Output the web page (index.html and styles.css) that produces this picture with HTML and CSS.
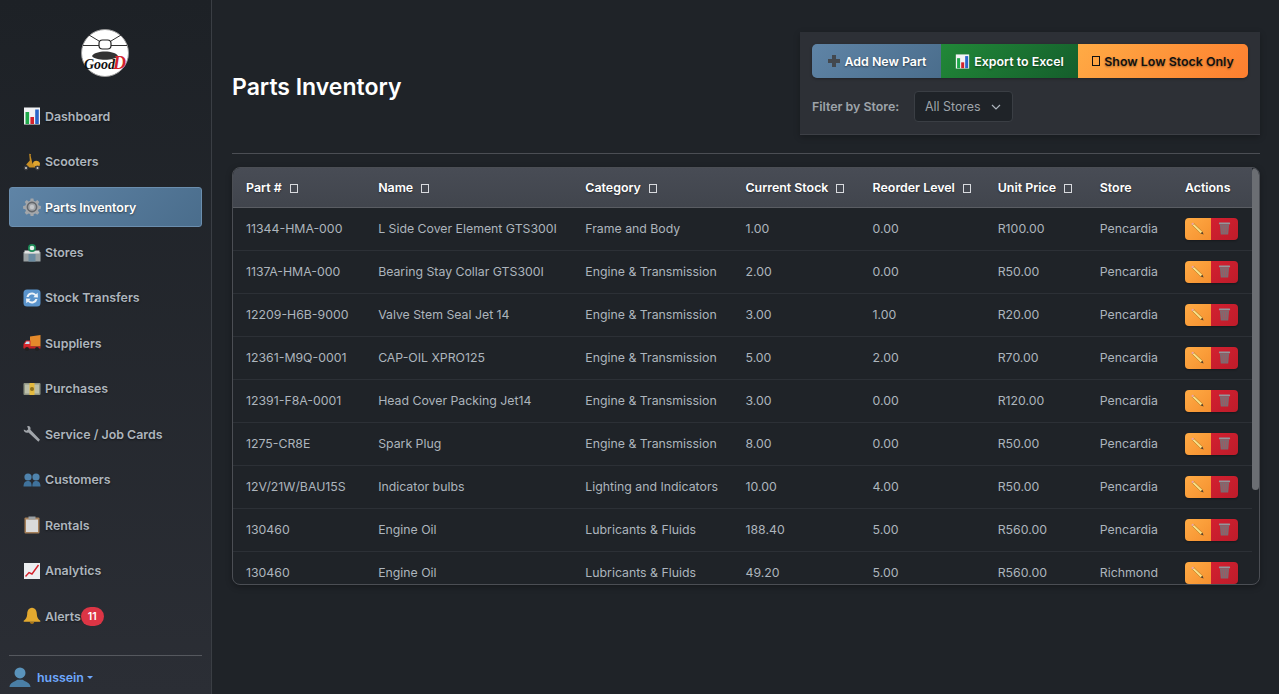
FILE: index.html
```html
<!DOCTYPE html>
<html>
<head>
	<title>Parts Inventory</title>
	<link rel="stylesheet" href="styles.css">
</head>
<body>
	<svg class="sprites" width="0" height="0">
		<symbol id="i-chart" viewBox="0 0 18 18">
			<rect x="1" y="0.5" width="16" height="17" fill="#f2f3f5"/>
			<rect x="2.5" y="5" width="3.6" height="12" fill="#1fa84a"/>
			<rect x="7.4" y="10" width="3.6" height="7" fill="#d3222c"/>
			<rect x="12.2" y="2.5" width="3.6" height="14.5" fill="#2a66c9"/>
		</symbol>
		<symbol id="i-scooter" viewBox="0 0 18 18">
			<path d="M6.2 0.8 L8 1.2 L7.6 2.4 L9.4 10.4 L13 10.4 L12 14.5 L6.5 14.5 L3.2 11.4 L6.8 7.4 Z" fill="#c98f24"/>
			<path d="M10 10.5 C10 7.4 15 6.4 17 10.2 L16.6 13 L11.5 13 Z" fill="#e0a52f"/>
			<circle cx="3" cy="15" r="2.4" fill="#3c3c40"/>
			<circle cx="14.5" cy="15" r="2.4" fill="#3c3c40"/>
			<circle cx="3" cy="15" r="1" fill="#d0d0d0"/>
			<circle cx="14.5" cy="15" r="1" fill="#d0d0d0"/>
		</symbol>
		<symbol id="i-gear" viewBox="0 0 18 18">
			<path d="M7.6 0.5 h2.8 l0.4 2.2 1.6 0.7 1.9-1.3 2 2 -1.3 1.9 0.7 1.6 2.2 0.4 v2.8 l-2.2 0.4 -0.7 1.6 1.3 1.9 -2 2 -1.9-1.3 -1.6 0.7 -0.4 2.2 h-2.8 l-0.4-2.2 -1.6-0.7 -1.9 1.3 -2-2 1.3-1.9 -0.7-1.6 -2.2-0.4 v-2.8 l2.2-0.4 0.7-1.6 -1.3-1.9 2-2 1.9 1.3 1.6-0.7 Z" fill="#a3a6aa"/>
			<circle cx="9" cy="9" r="4.6" fill="none" stroke="#63666b" stroke-width="1.6"/>
			<circle cx="9" cy="9" r="2.2" fill="#c4c6c9"/>
		</symbol>
		<symbol id="i-store" viewBox="0 0 18 18">
			<rect x="0.5" y="8" width="17" height="9.5" fill="#9aa1a3"/>
			<rect x="1.5" y="6.5" width="15" height="3" fill="#dfe2e2"/>
			<rect x="5.5" y="10" width="7" height="7.5" fill="#6a8ba1"/>
			<circle cx="9" cy="4" r="4" fill="#1d8a57"/>
			<circle cx="9" cy="4" r="2.3" fill="#e9f3ee"/>
		</symbol>
		<symbol id="i-transfer" viewBox="0 0 18 18">
			<rect x="0.5" y="0.5" width="17" height="17" rx="3.5" fill="#5b94cc"/>
			<path d="M3.5 8 A5.6 5.6 0 0 1 13 5.2 L14.6 3.8 L15 8.6 L10.3 8.2 L11.8 6.8 A3.6 3.6 0 0 0 5.6 8 Z" fill="#eef3f8"/>
			<path d="M14.5 10 A5.6 5.6 0 0 1 5 12.8 L3.4 14.2 L3 9.4 L7.7 9.8 L6.2 11.2 A3.6 3.6 0 0 0 12.4 10 Z" fill="#eef3f8"/>
		</symbol>
		<symbol id="i-truck" viewBox="0 0 18 18">
			<path d="M7 2.5 L17.5 1 V12.5 H7 Z" fill="#e58a2b"/>
			<path d="M3 6.5 H7.5 V13.5 H0.5 V10 Z" fill="#d8262c"/>
			<path d="M3.4 7.5 H6.5 V10 H1.8 Z" fill="#bfe0f0"/>
			<rect x="0.5" y="12.5" width="17" height="2" fill="#c92027"/>
			<circle cx="4" cy="15" r="2" fill="#222"/>
			<circle cx="14" cy="15" r="2" fill="#222"/>
		</symbol>
		<symbol id="i-money" viewBox="0 0 18 18">
			<rect x="0.5" y="3" width="17" height="12" rx="1" fill="#8f9584"/>
			<rect x="2" y="4.5" width="14" height="9" fill="#bcbfa9"/>
			<rect x="6.5" y="3" width="5" height="12" fill="#e3b93f"/>
			<circle cx="9" cy="9" r="2" fill="#8c6f1c"/>
		</symbol>
		<symbol id="i-wrench" viewBox="0 0 18 18">
			<path d="M0.8 4.5 L3.4 5.8 L5.2 4.2 L4.2 1.2 C6.4 0.4 8.2 2.2 7.4 4.8 L17 14.8 L15.4 16.8 L5.4 7.6 C2.8 8.4 0.4 6.8 0.8 4.5 Z" fill="#a1a5aa"/>
		</symbol>
		<symbol id="i-users" viewBox="0 0 18 18">
			<circle cx="5" cy="6" r="3.6" fill="#4f83ad"/>
			<circle cx="13" cy="6" r="3.6" fill="#4f83ad"/>
			<path d="M0.5 15.5 C0.5 11 3 10 5 10 C7 10 8.6 11 8.7 15.5 Z" fill="#3f729c"/>
			<path d="M9.3 15.5 C9.4 11 11 10 13 10 C15 10 17.5 11 17.5 15.5 Z" fill="#3f729c"/>
		</symbol>
		<symbol id="i-clipboard" viewBox="0 0 18 18">
			<rect x="1.5" y="1.5" width="15" height="16" rx="1" fill="#a5805a"/>
			<rect x="3" y="3.5" width="12" height="12.5" fill="#dadada"/>
			<rect x="5.5" y="0.5" width="7" height="3" fill="#9aa0a4"/>
		</symbol>
		<symbol id="i-trend" viewBox="0 0 18 18">
			<rect x="1" y="1" width="16" height="16" fill="#eceef0"/>
			<path d="M2.5 14.5 L6 10.5 L9 12 L15.5 3" fill="none" stroke="#d3222c" stroke-width="1.4"/>
		</symbol>
		<symbol id="i-bell" viewBox="0 0 18 18">
			<path d="M9 0.8 C12.5 1 13.7 4 13.8 7 C14 10.5 15 12 17.3 13.8 V14.8 H0.7 V13.8 C3 12 4 10.5 4.2 7 C4.3 4 5.5 1 9 0.8 Z" fill="#e3a92f"/>
			<path d="M6.8 15 H11.2 C11 17.6 7 17.6 6.8 15 Z" fill="#a87518"/>
		</symbol>
		<symbol id="i-person" viewBox="0 0 24 24">
			<circle cx="12" cy="7.5" r="6" fill="#5a93bb"/>
			<path d="M0.5 23 C1 17.5 6 17.5 9 15 H15 C18 17.5 23 17.5 23.5 23 Z" fill="#4a7fa6"/>
		</symbol>
		<symbol id="i-plus" viewBox="0 0 14 14">
			<path d="M5 1 H9 V5 H13 V9 H9 V13 H5 V9 H1 V5 H5 Z" fill="#43484e"/>
		</symbol>
		<symbol id="i-pencil" viewBox="0 0 14 14">
			<path d="M3.2 1.8 L12.4 10.4 L10.4 12.4 L1.4 3.6 Z" fill="#f8e08a" stroke="#a8701a" stroke-width="0.6"/>
			<path d="M1.4 3.6 L3.2 1.8 L2.4 1 C1.4 0.5 0.3 1.6 0.7 2.7 Z" fill="#e9a3ae"/>
			<path d="M12.4 10.4 L13.6 13.4 L10.4 12.4 Z" fill="#54432f"/>
		</symbol>
		<symbol id="i-trash" viewBox="0 0 14 14">
			<rect x="1" y="0.5" width="12" height="2" rx="0.6" fill="#94969b"/>
			<path d="M2 2.5 H12 L11 13.5 H3 Z" fill="#7f6a70"/>
			<path d="M4.5 4 L5 12 M7 4 V12 M9.5 4 L9 12" stroke="#a2575f" stroke-width="0.8"/>
		</symbol>
	</svg>

	<div class="app">
		<aside class="sidebar">
			<div class="logo">
				<svg viewBox="0 0 48 48" width="48" height="48">
					<circle cx="24" cy="24" r="23.5" fill="#fff" stroke="#999"/>
					<path d="M2 16.5 H46 M8 6 L18 12 M40 6 L30 12" stroke="#333" stroke-width="1"/>
					<rect x="18" y="11" width="12" height="9" rx="3.5" fill="#fff" stroke="#222" stroke-width="1.2"/>
					<path d="M11 27 C14 21 34 21 37 27 C34 32 14 32 11 27 Z" fill="#333"/>
					<text class="logo-text" x="3" y="40">Good</text>
					<text class="logo-mark" x="32" y="40">D</text>
				</svg>
			</div>
			<nav class="nav">
				<a class="nav-item"><svg class="nav-icon"><use href="#i-chart"/></svg>Dashboard</a>
				<a class="nav-item"><svg class="nav-icon"><use href="#i-scooter"/></svg>Scooters</a>
				<a class="nav-item active"><svg class="nav-icon"><use href="#i-gear"/></svg>Parts Inventory</a>
				<a class="nav-item"><svg class="nav-icon"><use href="#i-store"/></svg>Stores</a>
				<a class="nav-item"><svg class="nav-icon"><use href="#i-transfer"/></svg>Stock Transfers</a>
				<a class="nav-item"><svg class="nav-icon"><use href="#i-truck"/></svg>Suppliers</a>
				<a class="nav-item"><svg class="nav-icon"><use href="#i-money"/></svg>Purchases</a>
				<a class="nav-item"><svg class="nav-icon"><use href="#i-wrench"/></svg>Service / Job Cards</a>
				<a class="nav-item"><svg class="nav-icon"><use href="#i-users"/></svg>Customers</a>
				<a class="nav-item"><svg class="nav-icon"><use href="#i-clipboard"/></svg>Rentals</a>
				<a class="nav-item"><svg class="nav-icon"><use href="#i-trend"/></svg>Analytics</a>
				<a class="nav-item"><svg class="nav-icon"><use href="#i-bell"/></svg>Alerts<span class="badge">11</span></a>
			</nav>
			<div class="user">
				<svg class="user-icon"><use href="#i-person"/></svg>
				<span class="user-name">hussein</span>
				<span class="caret"></span>
			</div>
		</aside>

		<main class="main">
			<header class="page-head">
				<h1>Parts Inventory</h1>
				<div class="toolbar">
					<div class="btn-group">
						<a class="btn btn-blue"><svg class="btn-icon"><use href="#i-plus"/></svg>Add New Part</a>
						<a class="btn btn-green"><svg class="btn-icon"><use href="#i-chart"/></svg>Export to Excel</a>
						<a class="btn btn-orange"><span class="tofu"></span>Show Low Stock Only</a>
					</div>
					<div class="filter">
						<label>Filter by Store:</label>
						<div class="select">All Stores
							<svg class="chevron" viewBox="0 0 10 6"><path d="M1 1 L5 5 L9 1" fill="none" stroke="#adb5bd" stroke-width="1.2"/></svg>
						</div>
					</div>
				</div>
			</header>
			<hr class="rule">

			<div class="table-box">
				<table>
					<thead>
						<tr>
							<th class="c-part">Part #<span class="tofu sort"></span></th>
							<th class="c-name">Name<span class="tofu sort"></span></th>
							<th class="c-cat">Category<span class="tofu sort"></span></th>
							<th class="c-stock">Current Stock<span class="tofu sort"></span></th>
							<th class="c-reorder">Reorder Level<span class="tofu sort"></span></th>
							<th class="c-price">Unit Price<span class="tofu sort"></span></th>
							<th class="c-store">Store</th>
							<th class="c-actions">Actions</th>
						</tr>
					</thead>
					<tbody>
						<tr><td>11344-HMA-000</td><td>L Side Cover Element GTS300I</td><td>Frame and Body</td><td>1.00</td><td>0.00</td><td>R100.00</td><td>Pencardia</td><td><div class="actions"><a class="act act-edit"><svg><use href="#i-pencil"/></svg></a><a class="act act-del"><svg><use href="#i-trash"/></svg></a></div></td></tr>
						<tr><td>1137A-HMA-000</td><td>Bearing Stay Collar GTS300I</td><td>Engine &amp; Transmission</td><td>2.00</td><td>0.00</td><td>R50.00</td><td>Pencardia</td><td><div class="actions"><a class="act act-edit"><svg><use href="#i-pencil"/></svg></a><a class="act act-del"><svg><use href="#i-trash"/></svg></a></div></td></tr>
						<tr><td>12209-H6B-9000</td><td>Valve Stem Seal Jet 14</td><td>Engine &amp; Transmission</td><td>3.00</td><td>1.00</td><td>R20.00</td><td>Pencardia</td><td><div class="actions"><a class="act act-edit"><svg><use href="#i-pencil"/></svg></a><a class="act act-del"><svg><use href="#i-trash"/></svg></a></div></td></tr>
						<tr><td>12361-M9Q-0001</td><td>CAP-OIL XPRO125</td><td>Engine &amp; Transmission</td><td>5.00</td><td>2.00</td><td>R70.00</td><td>Pencardia</td><td><div class="actions"><a class="act act-edit"><svg><use href="#i-pencil"/></svg></a><a class="act act-del"><svg><use href="#i-trash"/></svg></a></div></td></tr>
						<tr><td>12391-F8A-0001</td><td>Head Cover Packing Jet14</td><td>Engine &amp; Transmission</td><td>3.00</td><td>0.00</td><td>R120.00</td><td>Pencardia</td><td><div class="actions"><a class="act act-edit"><svg><use href="#i-pencil"/></svg></a><a class="act act-del"><svg><use href="#i-trash"/></svg></a></div></td></tr>
						<tr><td>1275-CR8E</td><td>Spark Plug</td><td>Engine &amp; Transmission</td><td>8.00</td><td>0.00</td><td>R50.00</td><td>Pencardia</td><td><div class="actions"><a class="act act-edit"><svg><use href="#i-pencil"/></svg></a><a class="act act-del"><svg><use href="#i-trash"/></svg></a></div></td></tr>
						<tr><td>12V/21W/BAU15S</td><td>Indicator bulbs</td><td>Lighting and Indicators</td><td>10.00</td><td>4.00</td><td>R50.00</td><td>Pencardia</td><td><div class="actions"><a class="act act-edit"><svg><use href="#i-pencil"/></svg></a><a class="act act-del"><svg><use href="#i-trash"/></svg></a></div></td></tr>
						<tr><td>130460</td><td>Engine Oil</td><td>Lubricants &amp; Fluids</td><td>188.40</td><td>5.00</td><td>R560.00</td><td>Pencardia</td><td><div class="actions"><a class="act act-edit"><svg><use href="#i-pencil"/></svg></a><a class="act act-del"><svg><use href="#i-trash"/></svg></a></div></td></tr>
						<tr><td>130460</td><td>Engine Oil</td><td>Lubricants &amp; Fluids</td><td>49.20</td><td>5.00</td><td>R560.00</td><td>Richmond</td><td><div class="actions"><a class="act act-edit"><svg><use href="#i-pencil"/></svg></a><a class="act act-del"><svg><use href="#i-trash"/></svg></a></div></td></tr>
					</tbody>
				</table>
				<div class="scroll-thumb"></div>
			</div>
		</main>
	</div>
</body>
</html>
```

FILE: styles.css
```css
* {
	box-sizing: border-box;
}

html, body {
	height: 100%;
	margin: 0;
	overflow: hidden;
}

body {
	font-family: Inter, "Liberation Sans", sans-serif;
	font-size: 12.4px;
	color: #adb5bd;
	background-color: #1f2328;
}

.sprites {
	position: absolute;
}

.app {
	display: flex;
	height: 100%;
}

/* sidebar */
.sidebar {
	width: 212px;
	flex: none;
	display: flex;
	flex-direction: column;
	padding: 29px 9px 0;
	border-right: 1px solid #3a3e44;
	background: linear-gradient(180deg, #1d2126 0%, #2b2e35 100%);
	overflow: hidden;
}

.logo {
	display: flex;
	justify-content: center;
	height: 48px;
	margin: 0 2px 19.2px 0;
}

.logo-text {
	font-family: "Liberation Serif", serif;
	font-style: italic;
	font-weight: bold;
	font-size: 14px;
	fill: #111;
}

.logo-mark {
	font-family: "Liberation Serif", serif;
	font-style: italic;
	font-weight: bold;
	font-size: 18px;
	fill: #d3222c;
}

.nav {
	display: flex;
	flex-direction: column;
	gap: 5.45px;
}

.nav-item {
	display: flex;
	align-items: center;
	height: 40px;
	padding: 0 13px;
	border: 1px solid transparent;
	border-radius: 3px;
	font-weight: 600;
	color: #adb5bd;
	text-shadow: 0 1px 2px rgba(0, 0, 0, 0.5);
}

.nav-item.active {
	color: #fff;
	border-color: #6b8eae;
	background: linear-gradient(135deg, #5f84a6 0%, #4a6d8c 100%);
}

.nav-icon {
	width: 18px;
	height: 18px;
	margin-right: 4px;
	flex: none;
}

.badge {
	display: flex;
	align-items: center;
	justify-content: center;
	width: 23px;
	height: 19px;
	margin-top: 1px;
	border-radius: 10px;
	background-color: #dc3545;
	color: #fff;
	font-size: 10.5px;
	text-shadow: none;
}

.user {
	display: flex;
	align-items: center;
	margin-top: auto;
	height: 39px;
	padding-top: 4px;
	border-top: 1px solid #55585e;
}

.user-icon {
	width: 22px;
	height: 22px;
	margin-right: 6px;
}

.user-name {
	color: #6ea8fe;
	font-weight: 600;
}

.caret {
	margin-left: 3px;
	border-top: 3px solid #6ea8fe;
	border-left: 3px solid transparent;
	border-right: 3px solid transparent;
}

/* main column */
.main {
	flex: 1;
	min-width: 0;
	padding: 32px 19px 0 20px;
}

.page-head {
	display: flex;
	justify-content: space-between;
	align-items: center;
}

h1 {
	margin: 6px 0 0;
	font-size: 23px;
	font-weight: 600;
	color: #fff;
}

.toolbar {
	width: 460px;
	height: 103px;
	padding: 12px;
	background-color: #2d3036;
	border-bottom: 1px solid #3d4046;
	box-shadow: 0 2px 6px rgba(0, 0, 0, 0.25);
}

.btn-group {
	display: flex;
	height: 34px;
	border-radius: 5px;
	overflow: hidden;
	box-shadow: 0 1px 3px rgba(0, 0, 0, 0.3);
}

.btn {
	display: flex;
	align-items: center;
	justify-content: center;
	font-weight: 600;
	color: #fff;
	text-shadow: 0 1px 2px rgba(0, 0, 0, 0.5);
}

.btn-icon {
	width: 14px;
	height: 14px;
	margin-right: 4px;
}

.btn-blue {
	width: 129px;
	background: linear-gradient(135deg, #5f84a6 0%, #4a6d8c 100%);
}

.btn-green {
	width: 137px;
	background: linear-gradient(135deg, #218838 0%, #155e2c 100%);
}

.btn-green .btn-icon {
	width: 15px;
	height: 15px;
}

.btn-orange {
	width: 170px;
	color: #111;
	background: linear-gradient(135deg, #ffab45 0%, #fd7e2f 100%);
	text-shadow: 0 1px 2px rgba(0, 0, 0, 0.35);
}

.tofu {
	display: inline-block;
	width: 8px;
	height: 10px;
	margin-right: 4px;
	border: 1px solid currentColor;
}

.filter {
	display: flex;
	align-items: center;
	margin-top: 13px;
}

.filter label {
	width: 102px;
	font-weight: 600;
	color: #9ea4aa;
}

.select {
	display: flex;
	align-items: center;
	justify-content: space-between;
	width: 99px;
	height: 31px;
	padding: 0 11px 0 10px;
	border: 1px solid #3a3e44;
	border-radius: 4px;
	background-color: #1f2328;
	color: #9ea4aa;
}

.chevron {
	width: 10px;
	height: 6px;
}

.rule {
	margin: 18px 0 13px;
	border: 0;
	border-top: 1px solid #4b4e54;
}

/* parts table */
.table-box {
	position: relative;
	height: 418px;
	padding-right: 7px;
	border: 1px solid #4b4e54;
	border-radius: 8px;
	overflow: hidden;
	box-shadow: 0 2px 6px rgba(0, 0, 0, 0.3);
}

table {
	width: 100%;
	table-layout: fixed;
	border-collapse: collapse;
}

th {
	height: 39px;
	padding: 0 12px 0 13px;
	text-align: left;
	font-weight: 600;
	color: #fff;
	white-space: nowrap;
	background: linear-gradient(180deg, #484c55 0%, #41454d 100%);
	border-bottom: 1px solid #5a5d63;
	text-shadow: 0 1px 2px rgba(0, 0, 0, 0.4);
}

td {
	height: 43px;
	padding: 0 12px 0 13px;
	font-size: 12.3px;
	white-space: nowrap;
	border-bottom: 1px solid #2c3036;
	color: #adb5bd;
}

.sort {
	width: 8px;
	height: 9px;
	margin: 0 0 -1px 8px;
	color: #d8dade;
}

.c-part { width: 132px; }
.c-name { width: 207px; }
.c-cat { width: 160px; }
.c-stock { width: 127px; }
.c-reorder { width: 125px; }
.c-price { width: 103px; }
.c-store { width: 85px; }
.c-actions { width: 79px; }

th:nth-child(n+7), td:nth-child(n+7) {
	padding-left: 12px;
}

.actions {
	display: flex;
	width: 53px;
	height: 22px;
	border-radius: 4px;
	overflow: hidden;
	box-shadow: 0 1px 2px rgba(0, 0, 0, 0.3);
}

.act {
	display: flex;
	align-items: center;
	justify-content: center;
	width: 26px;
}

.act svg {
	width: 13px;
	height: 13px;
}

.act-edit {
	background: linear-gradient(135deg, #ffab45 0%, #f5902f 100%);
}

.act-del {
	width: 27px;
	background: linear-gradient(135deg, #d32030 0%, #bd1c2a 100%);
}

.scroll-thumb {
	position: absolute;
	top: 0;
	right: 0;
	width: 7px;
	height: 322px;
	border-radius: 4px;
	background-color: #6b6e73;
}
```
